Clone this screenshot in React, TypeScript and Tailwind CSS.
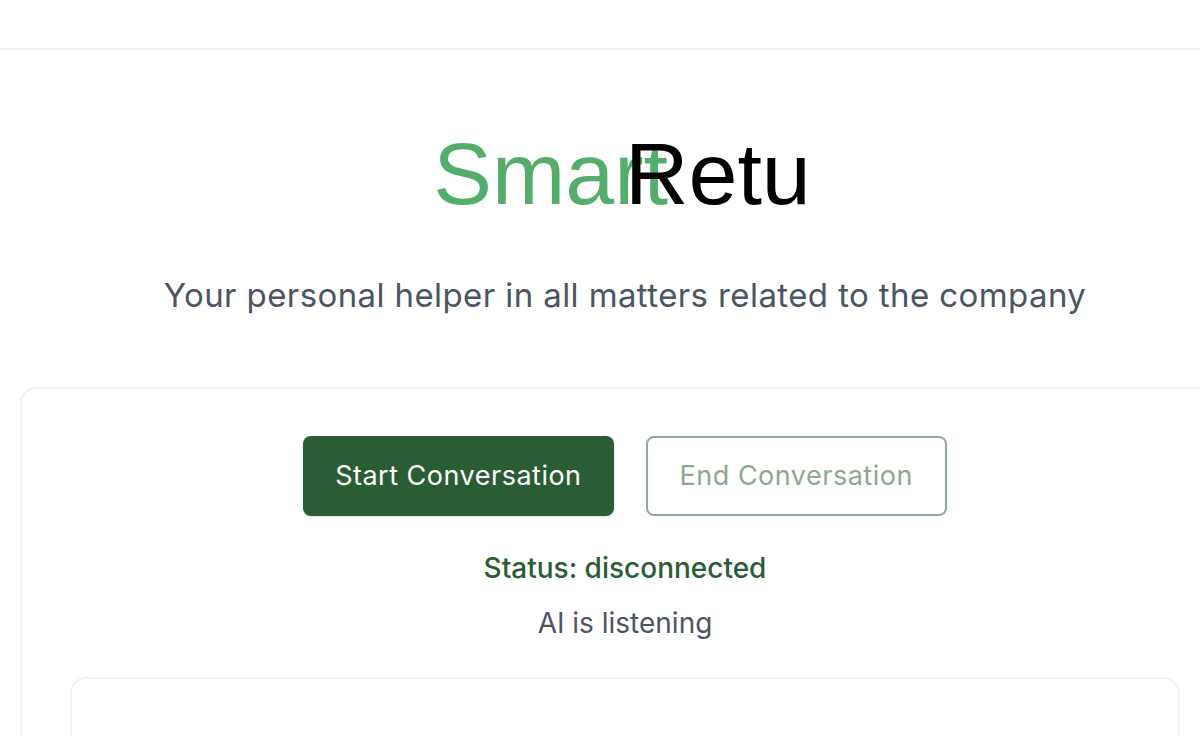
const App = () => {
  return (
    <div className="h-screen w-full overflow-hidden bg-white font-['Inter',sans-serif]">
      <div className="w-[1250px]">
        <Header />
        <main className="px-5">
          <Hero />
          <ConversationCard />
        </main>
      </div>
    </div>
  );
};

export default App;

const Header = () => {
  return <header className="h-[50px] border-b-2 border-[#f3f3f3] bg-white" />;
};

const Hero = () => {
  return (
    <div>
      <h1 className="mt-20 flex justify-center pr-[6px] font-['Liberation_Sans',Arial,sans-serif] text-[88px] leading-none font-normal">
        <span className="text-[#53ad6b]">Smart</span>
        <span className="-ml-[43px] text-black">Retu</span>
      </h1>
      <p className="mt-[57px] text-center text-[33px] leading-10 tracking-[0.4px] text-[#4b5563]">
        Your personal helper in all matters related to the company
      </p>
    </div>
  );
};

const ConversationCard = () => {
  return (
    <section className="mt-[72px] rounded-2xl border-2 border-[#f2f2f2] bg-white px-12 pt-[47px]">
      <div className="flex justify-center gap-8">
        <button className="flex h-[80px] items-center rounded-lg bg-[#2a5d34] px-8 text-[27px] tracking-[0.5px] text-white shadow-sm">
          Start Conversation
        </button>
        <button className="flex h-[80px] items-center rounded-lg border-2 border-[#8fad95] bg-white px-8 text-[27px] tracking-[0.5px] text-[#8aa990]">
          End Conversation
        </button>
      </div>
      <p className="mt-[34px] text-center text-[28px] leading-9 font-medium text-[#2a5d34]">
        Status: disconnected
      </p>
      <p className="mt-[19px] text-center text-[28px] leading-9 text-[#4b5563]">
        AI is listening
      </p>
      <div className="mt-9 h-[400px] rounded-2xl border-2 border-[#f2f2f2] bg-white" />
    </section>
  );
};
